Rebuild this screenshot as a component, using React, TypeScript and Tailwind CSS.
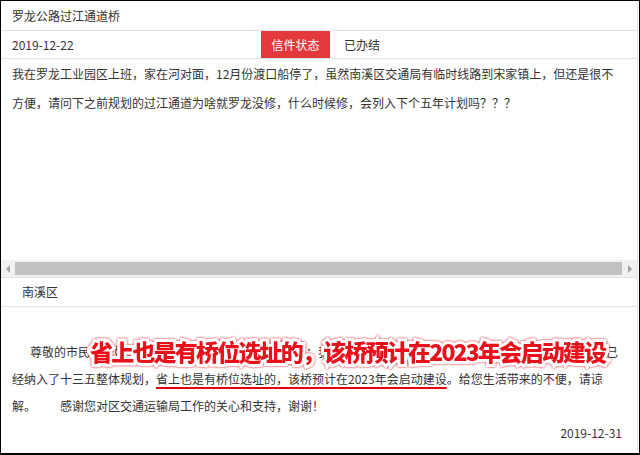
import React from "react";

function ScrollArrow({ dir }: { dir: "left" | "right" }) {
    return (
        <svg width="6" height="8" viewBox="0 0 6 8">
            {dir === "left" ? <polygon points="5,0 5,8 1,4" fill="#a3a3a3" /> : <polygon points="1,0 1,8 5,4" fill="#a3a3a3" />}
        </svg>
    );
}

function App() {
    return (
        <div className="relative w-[640px] h-[455px] bg-white border-l border-t border-r border-b-2 border-black text-[12px] text-[#333] font-['Noto_Sans_CJK_SC','Microsoft_YaHei',sans-serif] overflow-hidden">
            <div className="flex flex-col h-full mr-[1px] border-r border-[#dfe3e8]">
                <div className="flex items-center h-[30px] pl-[11px] border-b border-[#dfe3e8]">
                    <span>罗龙公路过江通道桥</span>
                </div>
                <div className="flex items-center h-[28px] border-b border-[#dfe3e8]">
                    <span className="w-[260px] pl-[11px]">2019-12-22</span>
                    <div className="flex items-center justify-center w-[69px] h-full bg-[#e4393c] text-white">信件状态</div>
                    <span className="ml-[14px]">已办结</span>
                </div>
                <div className="h-[201px] pl-[11px] leading-[29px]">
                    <div className="whitespace-nowrap">我在罗龙工业园区上班，家在河对面，12月份渡口船停了，虽然南溪区交通局有临时线路到宋家镇上，但还是很不</div>
                    <div className="whitespace-nowrap">方便，请问下之前规划的过江通道为啥就罗龙没修，什么时候修，会列入下个五年计划吗？？？</div>
                </div>
                <div className="flex items-center h-[17px] bg-[#f1f1f1]">
                    <div className="flex items-center justify-center w-[14px]">
                        <ScrollArrow dir="left" />
                    </div>
                    <div className="flex-1 h-[13px] bg-[#c1c1c1]" />
                    <div className="flex items-center justify-center w-[15px]">
                        <ScrollArrow dir="right" />
                    </div>
                </div>
                <div className="flex items-center h-[30px] pl-[21px] border-t border-b border-[#dfe3e8]">
                    <span>南溪区</span>
                </div>
                <div className="flex-1 pt-[31px] leading-[27px]">
                    <div className="pl-[29px] whitespace-nowrap">尊敬的市民，您好！关于您反映的问题，现回复如下：我局高度重视，罗龙过江通道项目前期工作正在推进，已</div>
                    <div className="pl-[11px] whitespace-nowrap">
                        经纳入了十三五整体规划，
                        <span className="underline decoration-[#e60012] decoration-2 underline-offset-[3px]">省上也是有桥位选址的，该桥预计在2023年会启动建设</span>
                        。给您生活带来的不便，请谅
                    </div>
                    <div className="pl-[11px] whitespace-nowrap">
                        解。<span className="ml-[24px]">感谢您对区交通运输局工作的关心和支持，谢谢！</span>
                    </div>
                    <div className="pr-[15px] text-right">2019-12-31</div>
                </div>
            </div>
            <div className="absolute left-[89px] top-[339px] whitespace-nowrap text-[23px] leading-none font-black tracking-[-1.8px] text-[#e8101a] [-webkit-text-stroke:6px_#fff] [paint-order:stroke_fill] [filter:drop-shadow(0_0_1px_#d0101a)]">
                省上也是有桥位选址的，该桥预计在2023年会启动建设
            </div>
        </div>
    );
}

export default App;
